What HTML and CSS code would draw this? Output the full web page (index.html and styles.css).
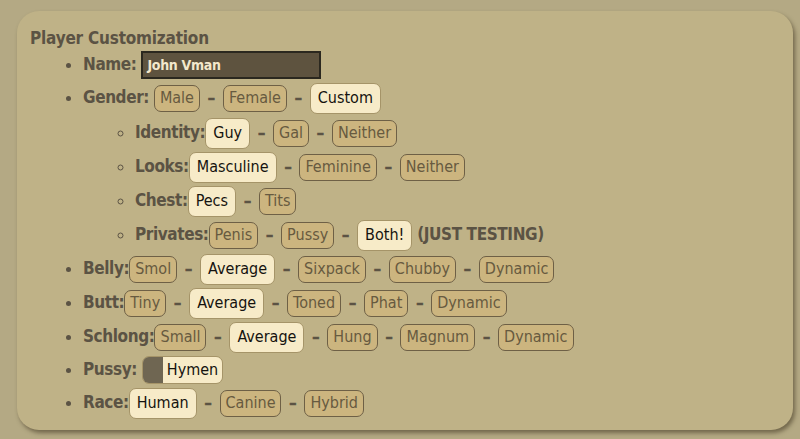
FILE: index.html
```html
<!DOCTYPE html>
<html>
<head>
<meta charset="utf-8">
<link rel="stylesheet" href="styles.css">
</head>
<body>
<div class="card">
  <div class="title">Player Customization</div>
  <ul class="list">
    <li class="row name-row"><span class="label">Name:</span> <span class="name-input">John Vman</span></li>
    <li class="row"><span class="label">Gender:</span> <span class="btn">Male</span> <span class="dash">–</span> <span class="btn">Female</span> <span class="dash">–</span> <span class="btn sel">Custom</span>
      <ul class="sub">
        <li class="row"><span class="label">Identity:</span><span class="btn sel">Guy</span> <span class="dash">–</span> <span class="btn">Gal</span> <span class="dash">–</span> <span class="btn">Neither</span></li>
        <li class="row"><span class="label">Looks:</span><span class="btn sel">Masculine</span> <span class="dash">–</span> <span class="btn">Feminine</span> <span class="dash">–</span> <span class="btn">Neither</span></li>
        <li class="row"><span class="label">Chest:</span><span class="btn sel">Pecs</span> <span class="dash">–</span> <span class="btn">Tits</span></li>
        <li class="row"><span class="label">Privates:</span><span class="btn">Penis</span> <span class="dash">–</span> <span class="btn">Pussy</span> <span class="dash">–</span> <span class="btn sel">Both!</span> <span class="label">(JUST TESTING)</span></li>
      </ul>
    </li>
    <li class="row"><span class="label">Belly:</span><span class="btn">Smol</span> <span class="dash">–</span> <span class="btn sel">Average</span> <span class="dash">–</span> <span class="btn">Sixpack</span> <span class="dash">–</span> <span class="btn">Chubby</span> <span class="dash">–</span> <span class="btn">Dynamic</span></li>
    <li class="row"><span class="label">Butt:</span><span class="btn">Tiny</span> <span class="dash">–</span> <span class="btn sel">Average</span> <span class="dash">–</span> <span class="btn">Toned</span> <span class="dash">–</span> <span class="btn">Phat</span> <span class="dash">–</span> <span class="btn">Dynamic</span></li>
    <li class="row"><span class="label">Schlong:</span><span class="btn">Small</span> <span class="dash">–</span> <span class="btn sel">Average</span> <span class="dash">–</span> <span class="btn">Hung</span> <span class="dash">–</span> <span class="btn">Magnum</span> <span class="dash">–</span> <span class="btn">Dynamic</span></li>
    <li class="row pussy-row"><span class="label">Pussy:</span> <span class="toggle"><span class="toggle-knob"></span><span class="toggle-text">Hymen</span></span></li>
    <li class="row"><span class="label">Race:</span><span class="btn sel">Human</span> <span class="dash">–</span> <span class="btn">Canine</span> <span class="dash">–</span> <span class="btn">Hybrid</span></li>
  </ul>
</div>
</body>
</html>
```
FILE: styles.css
```css
html, body {
  margin: 0;
  padding: 0;
}
body {
  background: #b4a984;
  width: 800px;
  height: 439px;
  overflow: hidden;
  font-family: "DejaVu Sans Condensed", "Liberation Sans", sans-serif;
  color: #5b5344;
}
.card {
  margin: 11px 0 0 17px;
  width: 776px;
  height: 419px;
  box-sizing: border-box;
  background: #bfb287;
  border-radius: 22px;
  box-shadow: 2px 3px 4px rgba(60, 50, 30, 0.55);
  padding: 17px 0 0 13px;
}
.title {
  font-weight: 700;
  font-size: 17px;
  line-height: 20px;
  letter-spacing: -0.2px;
  color: #5b5344;
}
.list {
  margin: 0;
  padding-left: 53px;
  list-style: disc;
}
.sub {
  margin: 0;
  padding-left: 52px;
  list-style: circle;
}
.row {
  line-height: 34px;
  height: 34px;
  font-size: 17px;
  white-space: nowrap;
}
.list > .row:nth-child(2) {
  height: auto;
}
.name-row {
  height: 32px;
  line-height: 32px;
}
.pussy-row {
  height: 32px;
  line-height: 32px;
}
.label {
  font-weight: 700;
  font-size: 17px;
  letter-spacing: -0.4px;
  color: #5b5344;
}
.dash {
  font-weight: 700;
  font-size: 16px;
  color: #5b5344;
  margin: 0 3px;
  -webkit-text-stroke: 0.7px #5b5344;
}
.btn {
  display: inline-block;
  vertical-align: middle;
  box-sizing: border-box;
  height: 27px;
  line-height: 24px;
  padding: 0 5px;
  font-size: 16px;
  color: #675a40;
  background: #ccb57f;
  border: 1.5px solid #6e6046;
  border-radius: 7px;
}
.btn.sel {
  height: 31px;
  line-height: 28px;
  padding: 0 7px;
  color: #15130f;
  background: #f7ebc8;
  border-color: #a59468;
}
.name-input {
  display: inline-block;
  vertical-align: middle;
  box-sizing: border-box;
  width: 180px;
  height: 28px;
  line-height: 24px;
  padding: 0 4px;
  background: #5e533f;
  border: 2px solid #2b281f;
  color: #f3e8cc;
  font-weight: 700;
  font-size: 14px;
  letter-spacing: -0.3px;
}
.toggle {
  display: inline-flex;
  vertical-align: middle;
  height: 28px;
  border-radius: 7px;
  overflow: hidden;
  border: 1.5px solid #a59468;
  box-sizing: border-box;
}
.toggle-knob {
  width: 20px;
  background: #6f6652;
}
.toggle-text {
  background: #f7ebc8;
  color: #15130f;
  font-size: 16px;
  line-height: 25px;
  padding: 0 4px;
}
```
